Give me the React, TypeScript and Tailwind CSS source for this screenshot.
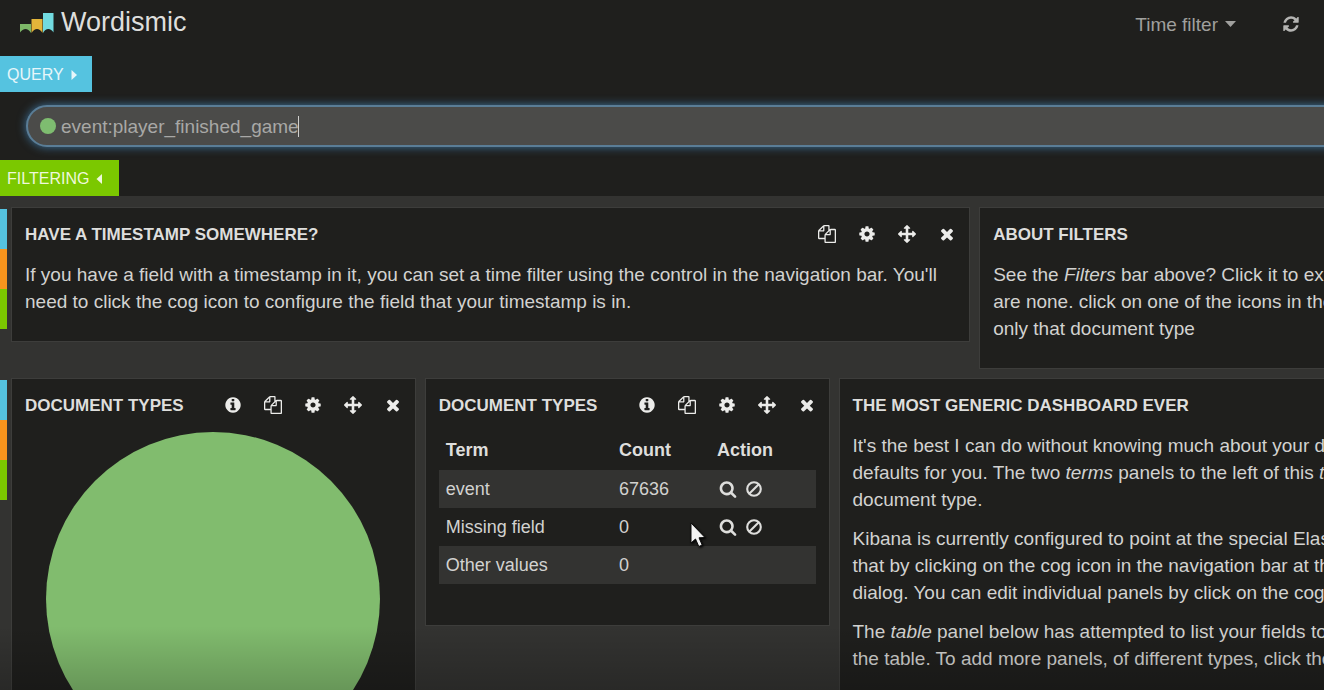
import type { ReactNode } from "react";

const PATHS = {
  info: "M1152 1376v-160q0-14-9-23t-23-9h-96v-512q0-14-9-23t-23-9h-320q-14 0-23 9t-9 23v160q0 14 9 23t23 9h96v320h-96q-14 0-23 9t-9 23v160q0 14 9 23t23 9h448q14 0 23-9t9-23zm-128-896v-160q0-14-9-23t-23-9h-192q-14 0-23 9t-9 23v160q0 14 9 23t23 9h192q14 0 23-9t9-23zm640 416q0 209-103 385.5t-279.5 279.5-385.5 103-385.5-103-279.5-279.5-103-385.5 103-385.5 279.5-279.5 385.5-103 385.5 103 279.5 279.5 103 385.5z",
  copy: "M1696 384q40 0 68 28t28 68v1216q0 40-28 68t-68 28h-960q-40 0-68-28t-28-68v-288h-544q-40 0-68-28t-28-68v-672q0-40 20-88t48-76l408-408q28-28 76-48t88-20h416q40 0 68 28t28 68v328q68-40 128-40h416zm-544 213l-299 299h299v-299zm-640-384l-299 299h299v-299zm196 647l316-316v-416h-384v416q0 40-28 68t-68 28h-416v640h512v-256q0-40 20-88t48-76zm956 804v-1152h-384v416q0 40-28 68t-68 28h-416v640h896z",
  cog: "M1152 896q0-106-75-181t-181-75-181 75-75 181 75 181 181 75 181-75 75-181zm512-109v222q0 12-8 23t-20 13l-185 28q-19 54-39 91 35 50 107 138 10 12 10 25t-9 23q-27 37-99 108t-94 71q-12 0-26-9l-138-108q-44 23-91 38-16 136-29 186-7 28-36 28h-222q-14 0-24.5-8.5t-11.5-21.5l-28-184q-49-16-90-37l-141 107q-10 9-25 9-14 0-25-11-126-114-165-168-7-10-7-23 0-12 8-23 15-21 51-66.5t54-70.5q-27-50-41-99l-183-27q-13-2-21-12.5t-8-23.5v-222q0-12 8-23t19-13l186-28q14-46 39-92-40-57-107-138-10-12-10-24 0-10 9-23 26-36 98.5-107.5t94.5-71.5q13 0 26 10l138 107q44-23 91-38 16-136 29-186 7-28 36-28h222q14 0 24.5 8.5t11.5 21.5l28 184q49 16 90 37l142-107q9-9 24-9 13 0 25 10 129 119 165 170 7 8 7 22 0 12-8 23-15 21-51 66.5t-54 70.5q26 50 41 98l183 28q13 2 21 12.5t8 23.5z",
  move: "M1792 896q0 26-19 45l-256 256q-19 19-45 19t-45-19-19-45v-128h-384v384h128q26 0 45 19t19 45-19 45l-256 256q-19 19-45 19t-45-19l-256-256q-19-19-19-45t19-45 45-19h128v-384h-384v128q0 26-19 45t-45 19-45-19l-256-256q-19-19-19-45t19-45l256-256q19-19 45-19t45 19 19 45v128h384v-384h-128q-26 0-45-19t-19-45 19-45l256-256q19-19 45-19t45 19l256 256q19 19 19 45t-19 45-45 19h-128v384h384v-128q0-26 19-45t45-19 45 19l256 256q19 19 19 45z",
  close: "M1490 1322q0 40-28 68l-136 136q-28 28-68 28t-68-28l-294-294-294 294q-28 28-68 28t-68-28l-136-136q-28-28-28-68t28-68l294-294-294-294q-28-28-28-68t28-68l136-136q28-28 68-28t68 28l294 294 294-294q28-28 68-28t68 28l136 136q28 28 28 68t-28 68l-294 294 294 294q28 28 28 68z",
  search: "M1216 832q0-185-131.5-316.5t-316.5-131.5-316.5 131.5-131.5 316.5 131.5 316.5 316.5 131.5 316.5-131.5 131.5-316.5zm512 832q0 52-38 90t-90 38q-54 0-90-38l-343-342q-179 124-399 124-143 0-273.5-55.5t-225-150-150-225-55.5-273.5 55.5-273.5 150-225 225-150 273.5-55.5 273.5 55.5 225 150 150 225 55.5 273.5q0 220-124 399l343 343q37 37 37 90z",
  refresh: "M1639 1056q0 5-1 7-64 268-268 434.5t-478 166.5q-146 0-282.5-55t-243.5-157l-129 129q-19 19-45 19t-45-19-19-45v-448q0-26 19-45t45-19h448q26 0 45 19t19 45-19 45l-137 137q71 66 161 102t187 36q134 0 250-65t186-179q11-17 53-117 8-23 30-23h192q13 0 22.5 9.5t9.5 22.5zm25-800v448q0 26-19 45t-45 19h-448q-26 0-45-19t-19-45 19-45l138-138q-148-137-349-137-134 0-250 65t-186 179q-11 17-53 117-8 23-30 23h-199q-13 0-22.5-9.5t-9.5-22.5v-7q65-268 270-434.5t480-166.5q146 0 284 55.5t245 156.5l130-129q19-19 45-19t45 19 19 45z",
};

type IconName = keyof typeof PATHS;

function Icon({ name }: { name: IconName }) {
  return (
    <svg viewBox="0 0 1792 1792" fill="currentColor" aria-hidden="true" className="size-[18px]">
      <path d={PATHS[name]} />
    </svg>
  );
}

function BanIcon() {
  return (
    <svg viewBox="0 0 18 18" fill="none" stroke="currentColor" strokeWidth="2.1" aria-hidden="true" className="size-[18px]">
      <circle cx="9" cy="9" r="6.8" />
      <path d="M4.2 13.8 13.8 4.2" />
    </svg>
  );
}

function Logo() {
  return (
    <svg viewBox="0 0 34 20" aria-hidden="true" className="h-5 w-[34px]">
      <path d="M0 11h11v9Q8.500 16 5.500 16T0 19.500z" fill="#7db768" />
      <path d="M11.500 6h11v14q-2.500-4-5.500-4t-5.500 4z" fill="#e3b53a" />
      <path d="M23 0h10.500v19.500Q31.500 16 28.300 16T23 20z" fill="#72dbe0" />
    </svg>
  );
}

const LABELS: Record<string, string> = {
  info: "Panel info",
  copy: "Duplicate panel",
  cog: "Configure panel",
  move: "Move panel",
  close: "Remove panel",
};

function Panel({ title, tools = [], children, className = "" }: { title: string; tools?: IconName[]; children: ReactNode; className?: string }) {
  return (
    <section className={`border border-[#3d3d3b] bg-[#1f1f1d] px-[13px] pt-[13px] ${className}`}>
      <header className="flex h-[27px] items-start justify-between">
        <h2 className="text-[17px] font-bold whitespace-nowrap uppercase text-[#dededc]">{title}</h2>
        <div className="flex gap-[22px] pt-1 text-[#ececea]">
          {tools.map((t) => (
            <button key={t} type="button" aria-label={LABELS[t]}>
              <Icon name={t} />
            </button>
          ))}
        </div>
      </header>
      {children}
    </section>
  );
}

function Row({ columns, children }: { columns: string; children: ReactNode }) {
  return (
    <div className="flex items-start">
      <div className="w-[7px] shrink-0 pt-0.5">
        <div className="h-10 bg-[#55c3e0]" />
        <div className="h-10 bg-[#f7941d]" />
        <div className="h-10 bg-[#7bc800]" />
      </div>
      <div className={`grid w-[125%] shrink-0 items-start ${columns}`}>{children}</div>
    </div>
  );
}

const TERMS = [
  { term: "event", count: "67636", actions: true },
  { term: "Missing field", count: "0", actions: true },
  { term: "Other values", count: "0", actions: false },
];

const ALL_TOOLS: IconName[] = ["info", "copy", "cog", "move", "close"];

export default function App() {
  return (
    <div className="relative h-screen overflow-hidden bg-[#333331] font-['Liberation_Sans',Arial,sans-serif] text-[19px] leading-[27px] text-[#d2d2d0]">
      <div className="bg-[#1f1f1d]">
        <nav className="flex h-14 items-start justify-between pt-1 pr-6 pl-5">
          <div className="flex items-start gap-[7px] pt-0.5">
            <div className="pt-[7px]">
              <Logo />
            </div>
            <h1 className="text-[27px] leading-8 text-[#dededc]">Wordismic</h1>
          </div>
          <div className="flex h-10 items-center text-[#a0a09e]">
            <button type="button" className="flex items-center gap-[7px]">
              Time filter
              <svg viewBox="0 0 11 6" fill="currentColor" aria-hidden="true" className="h-1.5 w-[11px]">
                <path d="M0 0h11L5.500 6z" />
              </svg>
            </button>
            <button type="button" aria-label="Refresh" className="ml-[46px] text-[#b4b4b2]">
              <Icon name="refresh" />
            </button>
          </div>
        </nav>

        <button type="button" className="flex h-9 w-[92px] items-center gap-[7px] bg-[#55c3e0] pt-px pl-[7px] text-base text-[#e6f6fa]">
          QUERY
          <svg viewBox="0 0 6 10" fill="currentColor" aria-hidden="true" className="h-2.5 w-1.5">
            <path d="M0.500 0l5.500 5L0.500 10z" />
          </svg>
        </button>

        <div className="pt-[13px] pb-[13px] pl-[26px]">
          <div className="-mr-10 flex h-[42px] items-center gap-[5px] rounded-full border-2 border-[#5a7d96] bg-[#4b4b49] pl-3 shadow-[0_0_10px_rgba(82,168,236,0.6)]">
            <span className="size-4 rounded-full bg-[#7ebc70]" />
            <div className="relative flex-1">
              <input
                aria-label="Query"
                defaultValue="event:player_finished_game"
                className="block w-full bg-transparent text-[19px] leading-[27px] text-[#a8a8a6] outline-none"
              />
              <span className="pointer-events-none absolute inset-y-0 left-0 flex items-center" aria-hidden="true">
                <span className="ml-[237px] h-[21px] w-px bg-[#d0d0ce]" />
              </span>
            </div>
          </div>
        </div>

        <button type="button" className="flex h-9 w-[119px] items-center gap-[7px] bg-[#7bc800] pt-px pl-[7px] text-base text-[#eef8dc]">
          FILTERING
          <svg viewBox="0 0 6 10" fill="currentColor" aria-hidden="true" className="h-2.5 w-1.5">
            <path d="M6 0L0.500 5 6 10z" />
          </svg>
        </button>
      </div>

      <main className="flex flex-col gap-[9px] pt-[11px]">
        <Row columns="grid-cols-[58.5%_41.5%]">
          <div className="pr-[5px] pl-1">
            <Panel title="Have a timestamp somewhere?" tools={["copy", "cog", "move", "close"]} className="pb-[26px]">
              <p className="mt-[13px]">
                If you have a field with a timestamp in it, you can set a time filter using the control in the navigation bar. You'll need to click the cog icon to configure the field that your timestamp is in.
              </p>
            </Panel>
          </div>
          <div className="pr-[5px] pl-1">
            <Panel title="About filters" className="pb-[26px]">
              <p className="mt-[13px] whitespace-nowrap">
                See the <em>Filters</em> bar above? Click it to expand
                <br />
                are none. click on one of the icons in the
                <br />
                only that document type
              </p>
            </Panel>
          </div>
        </Row>

        <Row columns="grid-cols-[1fr_1fr_2fr]">
          <div className="min-w-0 pr-[5px] pl-1">
            <Panel title="Document types" tools={ALL_TOOLS} className="pb-10">
              <svg viewBox="0 0 334 334" role="img" aria-label="All documents are of type event" className="mx-auto mt-[13px] size-[334px]">
                <circle cx="167" cy="167" r="167" fill="#81bc6e" />
              </svg>
            </Panel>
          </div>

          <div className="min-w-0 pr-[5px] pl-1">
            <Panel title="Document types" tools={ALL_TOOLS} className="pb-[41px]">
              <table className="mt-3 w-full table-fixed text-left text-lg leading-[27px]">
                <thead>
                  <tr className="h-[39px] text-[#dededc]">
                    <th className="w-[46%] pl-[7px]">Term</th>
                    <th className="w-[26%] pl-[7px]">Count</th>
                    <th className="pl-[7px]">Action</th>
                  </tr>
                </thead>
                <tbody>
                  {TERMS.map((row) => (
                    <tr key={row.term} className="h-[38px] odd:bg-[#333331]">
                      <td className="pl-[7px]">{row.term}</td>
                      <td className="pl-[7px]">{row.count}</td>
                      <td className="pl-[9px]">
                        {row.actions && (
                          <div className="flex gap-2 text-[#dededc]">
                            <button type="button" aria-label={`Filter for ${row.term}`}>
                              <Icon name="search" />
                            </button>
                            <button type="button" aria-label={`Exclude ${row.term}`}>
                              <BanIcon />
                            </button>
                          </div>
                        )}
                      </td>
                    </tr>
                  ))}
                </tbody>
              </table>
            </Panel>
          </div>

          <div className="min-w-0 pr-[5px] pl-1">
            <Panel title="The most generic dashboard ever" className="pb-[26px]">
              <div className="mt-[13px] flex flex-col gap-3 whitespace-nowrap">
                <p>
                  It's the best I can do without knowing much about your data
                  <br />
                  defaults for you. The two <em>terms</em> panels to the left of this <em>text</em>
                  <br />
                  document type.
                </p>
                <p>
                  Kibana is currently configured to point at the special Elasticsearch
                  <br />
                  that by clicking on the cog icon in the navigation bar at the
                  <br />
                  dialog. You can edit individual panels by click on the cog
                </p>
                <p>
                  The <em>table</em> panel below has attempted to list your fields to
                  <br />
                  the table. To add more panels, of different types, click the
                </p>
              </div>
            </Panel>
          </div>
        </Row>
      </main>

      <div className="pointer-events-none absolute inset-x-0 bottom-0 h-16 bg-linear-to-t from-black/20 to-transparent" />

      <svg viewBox="0 0 16 26" aria-hidden="true" className="pointer-events-none absolute top-[522px] left-[690px] h-[26px] w-4 drop-shadow-[1px_1px_1px_black]">
        <path d="M1 1v20l4.500-4 3.300 7.500 3.400-1.500-3.200-7.200 6-.3z" fill="#f4f4f4" stroke="#0c0c0c" strokeWidth="1" />
      </svg>
    </div>
  );
}
